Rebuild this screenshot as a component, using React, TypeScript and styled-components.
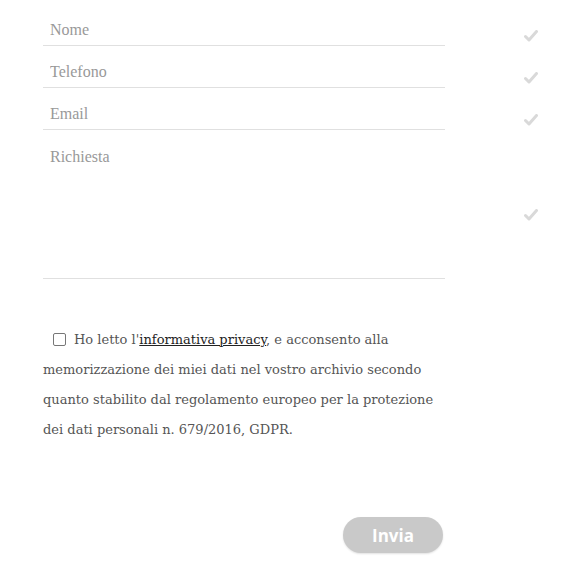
import styled, { createGlobalStyle } from 'styled-components';

const GlobalStyle = createGlobalStyle`
  body {
    margin: 0;
    background: #fff;
    font-family: "Liberation Serif", serif;
  }
`;

const fields = [
  { name: 'nome', placeholder: 'Nome' },
  { name: 'telefono', placeholder: 'Telefono' },
  { name: 'email', placeholder: 'Email' },
];

function Check(): JSX.Element {
  return (
    <svg width="14" height="12" viewBox="0 0 14 12">
      <path d="M1.5 6.5 L5 10 L12.5 1.5" fill="none" stroke="#d9d9d9" strokeWidth="3" strokeLinecap="round" strokeLinejoin="round" />
    </svg>
  );
}

export default function App(): JSX.Element {
  return (
    <>
      <GlobalStyle />
      <Wrapper>
        <form onSubmit={e => e.preventDefault()}>
          {fields.map(f => (
            <Row key={f.name}>
              <Input type="text" name={f.name} placeholder={f.placeholder} />
              <CheckCell>
                <Check />
              </CheckCell>
            </Row>
          ))}
          <Row>
            <TextArea name="richiesta" placeholder="Richiesta" />
            <CheckCell $offset={79}>
              <Check />
            </CheckCell>
          </Row>

          <Privacy>
            <Box />
            Ho letto l'<a href="#">informativa privacy</a>, e acconsento alla memorizzazione dei miei dati nel
            vostro archivio secondo quanto stabilito dal regolamento europeo per la protezione dei dati personali n.
            679/2016, GDPR.
          </Privacy>

          <Actions>
            <Button type="submit">Invia</Button>
          </Actions>
        </form>
      </Wrapper>
    </>
  );
}

const Wrapper = styled.div`
  width: 585px;
  height: 571px;
  padding: 4px 0 0 43px;
  box-sizing: border-box;

  form {
    display: flex;
    flex-direction: column;
    width: 402px;
  }
`;

const Row = styled.div`
  display: flex;
  align-items: flex-start;
  width: 500px;
`;

const Input = styled.input`
  width: 402px;
  height: 42px;
  box-sizing: border-box;
  border: none;
  border-bottom: 1px solid #e0e0e0;
  outline: none;
  padding: 10px 7px 0;
  font-family: "Liberation Serif", serif;
  font-size: 16px;
  color: #555;
  background: transparent;

  &::placeholder {
    color: #999;
  }
`;

const TextArea = styled.textarea`
  width: 402px;
  height: 149px;
  box-sizing: border-box;
  border: none;
  border-bottom: 1px solid #e0e0e0;
  outline: none;
  resize: none;
  padding: 18px 7px;
  font-family: "Liberation Serif", serif;
  font-size: 16px;
  color: #555;
  background: transparent;

  &::placeholder {
    color: #999;
  }
`;

const CheckCell = styled.div<{ $offset?: number }>`
  display: flex;
  justify-content: center;
  width: 20px;
  margin-left: 76px;
  padding-top: ${p => p.$offset ?? 26}px;
`;

const Privacy = styled.p`
  margin: 46px 0 0;
  width: 402px;
  font-family: "DejaVu Serif", serif;
  font-size: 13px;
  line-height: 30px;
  color: #555;

  a {
    color: #222;
    text-decoration: underline;
  }
`;

const Box = styled.span`
  display: inline-block;
  width: 11px;
  height: 11px;
  border: 1.5px solid #777;
  border-radius: 2px;
  margin: 0 8px 0 10px;
  vertical-align: -2px;
`;

const Actions = styled.div`
  display: flex;
  justify-content: flex-end;
  margin-top: 72px;
`;

const Button = styled.button`
  width: 100px;
  height: 36px;
  margin-right: 2px;
  border: none;
  border-radius: 18px;
  background: #c9c9c9;
  box-shadow: 0 1px 2px rgba(0, 0, 0, 0.12);
  color: #fff;
  font-family: "Open Sans", sans-serif;
  font-weight: 700;
  font-size: 17px;
  cursor: pointer;
`;
